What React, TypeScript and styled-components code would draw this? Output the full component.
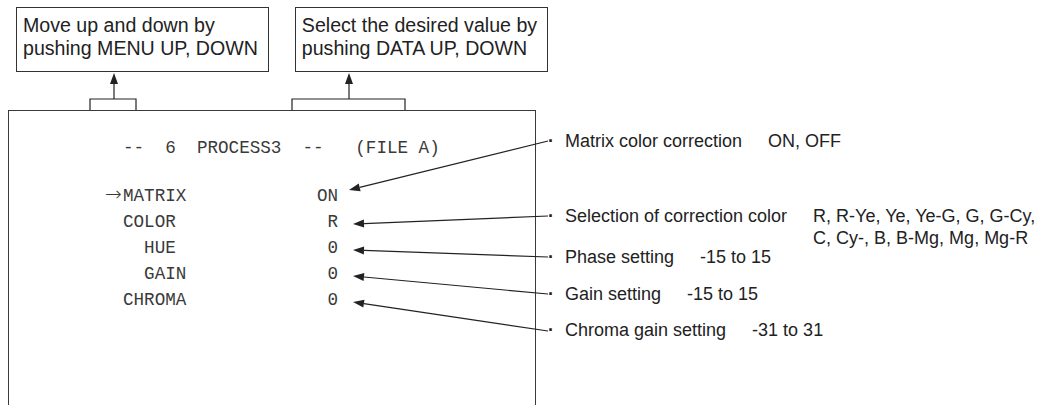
import { ReactElement } from "react";
import styled, { createGlobalStyle } from "styled-components";

type Point = [number, number];

type MenuItem = {
  name: string;
  value: string;
  indent?: number;
  selected?: boolean;
};

type Note = {
  label: string;
  range: string;
  gap: number;
  from: Point;
  to: Point;
};

const MENU_ITEMS: MenuItem[] = [
  { name: "MATRIX", value: "ON", selected: true },
  { name: "COLOR", value: "R" },
  { name: "HUE", value: "0", indent: 2 },
  { name: "GAIN", value: "0", indent: 2 },
  { name: "CHROMA", value: "0" },
];

const NOTES: Note[] = [
  { label: "Matrix color correction", range: "ON, OFF", gap: 20, from: [548, 141], to: [349, 190] },
  {
    label: "Selection of correction color",
    range: "R, R-Ye, Ye, Ye-G, G, G-Cy,\nC, Cy-, B, B-Mg, Mg, Mg-R",
    gap: 53,
    from: [548, 216],
    to: [353, 224],
  },
  { label: "Phase setting", range: "-15 to 15", gap: 19, from: [548, 257], to: [353, 250] },
  { label: "Gain setting", range: "-15 to 15", gap: 15, from: [548, 294], to: [353, 276] },
  { label: "Chroma gain setting", range: "-31 to 31", gap: 14, from: [548, 331], to: [353, 302] },
];

// arrow head triangle pointing at `to`, returns line end + polygon points
function arrowHead(from: Point, to: Point, len = 11, half = 4) {
  const dx = to[0] - from[0];
  const dy = to[1] - from[1];
  const d = Math.hypot(dx, dy);
  const ux = dx / d;
  const uy = dy / d;
  const bx = to[0] - ux * len;
  const by = to[1] - uy * len;
  const points = [
    `${to[0]},${to[1]}`,
    `${bx - uy * half},${by + ux * half}`,
    `${bx + uy * half},${by - ux * half}`,
  ].join(" ");
  return { base: [bx, by] as Point, points };
}

function Pointer({ from, to }: { from: Point; to: Point }): ReactElement {
  const { base, points } = arrowHead(from, to);
  return (
    <g>
      <line x1={from[0]} y1={from[1]} x2={base[0]} y2={base[1]} />
      <polygon points={points} />
    </g>
  );
}

export default function App(): ReactElement {
  return (
    <>
      <GlobalStyle />
      <StyledDiagram>
        <StyledCalloutRow>
          <StyledCallout>
            Move up and down by
            <br />
            pushing MENU UP, DOWN
          </StyledCallout>
          <StyledCallout>
            Select the desired value by
            <br />
            pushing DATA UP, DOWN
          </StyledCallout>
        </StyledCalloutRow>

        <StyledBody>
          <StyledScreen>
            <StyledMenuTitle>{"--  6  PROCESS3  --   (FILE A)"}</StyledMenuTitle>
            {MENU_ITEMS.map((item) => (
              <StyledMenuRow key={item.name}>
                <StyledMenuName $indent={item.indent ?? 0}>
                  {item.selected && <StyledMarker>→</StyledMarker>}
                  {item.name}
                </StyledMenuName>
                <StyledMenuValue>{item.value}</StyledMenuValue>
              </StyledMenuRow>
            ))}
          </StyledScreen>

          <StyledNotes>
            {NOTES.map((note) => (
              <StyledNote key={note.label} $gap={note.gap}>
                <StyledBullet>·</StyledBullet>
                <StyledNoteLabel>{note.label}</StyledNoteLabel>
                <StyledNoteRange>{note.range}</StyledNoteRange>
              </StyledNote>
            ))}
          </StyledNotes>
        </StyledBody>

        <StyledLines width={1061} height={405} viewBox="0 0 1061 405">
          <Pointer from={[114, 99]} to={[114, 73]} />
          <polyline points="90,110 90,99 136,99 136,110" fill="none" />
          <Pointer from={[349, 99]} to={[349, 73]} />
          <polyline points="292,110 292,99 405,99 405,110" fill="none" />
          {NOTES.map((note) => (
            <Pointer key={note.label} from={note.from} to={note.to} />
          ))}
        </StyledLines>
      </StyledDiagram>
    </>
  );
}

const GlobalStyle = createGlobalStyle`
  html, body {
    margin: 0;
    padding: 0;
    background: #fff;
  }
  body {
    height: 405px;
    overflow: hidden;
    width: 1061px;
  }
`;

const StyledDiagram = styled.div`
  color: #222;
  height: 405px;
  overflow: hidden;
  position: relative;
  width: 1061px;
`;

const StyledCalloutRow = styled.div`
  display: flex;
  gap: 26px;
  padding: 7px 0 0 16px;
`;

const StyledCallout = styled.div`
  border: 1.3px solid #333;
  font-family: "Liberation Sans", Arial, sans-serif;
  font-size: 19.6px;
  line-height: 23px;
  padding: 6px 10px 11px 6px;
  white-space: nowrap;
`;

const StyledBody = styled.div`
  display: flex;
  margin-top: 38px;
`;

const StyledScreen = styled.div`
  border: 1.5px solid #3a3a3a;
  border-bottom: none;
  box-sizing: border-box;
  color: #3a3a3a;
  font-family: "Liberation Mono", "Courier New", monospace;
  font-size: 17.6px;
  height: 300px;
  margin-left: 8px;
  padding: 23.5px 0 0 114px;
  width: 528px;
`;

const StyledMenuTitle = styled.div`
  line-height: 26px;
  margin-bottom: 22px;
  white-space: pre;
`;

const StyledMenuRow = styled.div`
  display: flex;
  justify-content: space-between;
  line-height: 26px;
  width: 215px;
`;

const StyledMenuName = styled.span<{ $indent: number }>`
  padding-left: ${(p) => p.$indent}ch;
`;

const StyledMarker = styled.span`
  display: inline-block;
  font-family: "DejaVu Sans", sans-serif;
  font-size: 20px;
  font-weight: 300;
  line-height: 20px;
  margin-left: -18px;
  width: 18px;
`;

const StyledMenuValue = styled.span``;

const StyledNotes = styled.div`
  display: flex;
  flex-direction: column;
  font-family: "Liberation Sans", Arial, sans-serif;
  font-size: 18px;
  line-height: 22px;
  margin-left: 11px;
`;

const StyledNote = styled.div<{ $gap: number }>`
  align-items: flex-start;
  display: flex;
  height: 22px;
  margin-top: ${(p) => p.$gap}px;
  white-space: nowrap;
`;

const StyledBullet = styled.span`
  font-weight: bold;
  margin-right: 10px;
  text-align: center;
  width: 8px;
`;

const StyledNoteLabel = styled.span``;

const StyledNoteRange = styled.span`
  margin-left: 26px;
  white-space: pre;
`;

const StyledLines = styled.svg`
  fill: #222;
  left: 0;
  pointer-events: none;
  position: absolute;
  stroke: #222;
  stroke-width: 1.2;
  top: 0;

  polygon {
    stroke: none;
  }
`;
